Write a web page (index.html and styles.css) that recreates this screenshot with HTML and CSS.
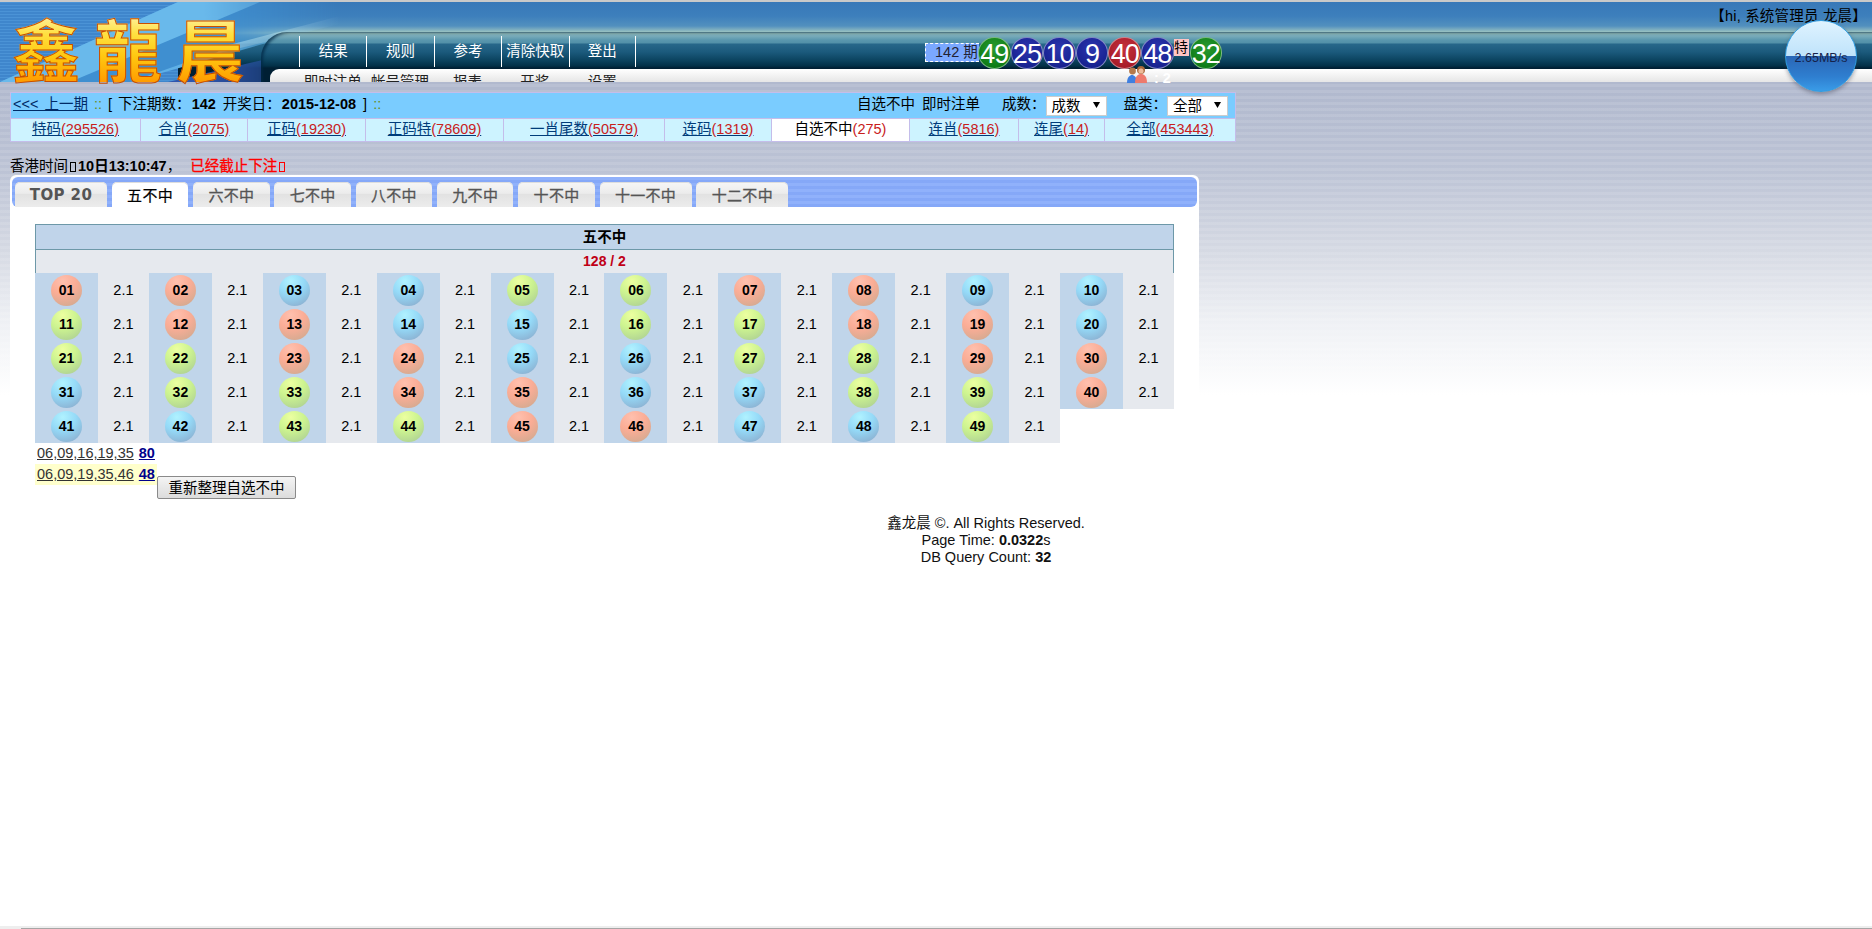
FILE: index.html
```html
<!DOCTYPE html>
<html lang="zh">
<head>
<meta charset="utf-8">
<title>鑫龍晨</title>
<link rel="stylesheet" href="styles.css">
</head>
<body>
<header class="header">
  <svg class="logo-art" width="340" height="80" viewBox="0 0 340 80" aria-hidden="true">
    <defs>
      <linearGradient id="fade" x1="0" x2="1" y1="0" y2="0">
        <stop offset="0.6" stop-color="#fff"/>
        <stop offset="1" stop-color="#000"/>
      </linearGradient>
      <mask id="fadeMask"><rect width="340" height="80" fill="url(#fade)"/></mask>
      <pattern id="lines" width="3" height="3" patternUnits="userSpaceOnUse">
        <rect width="3" height="3" fill="#3f86cc"/>
        <rect width="3" height="1" fill="#4b93d6"/>
      </pattern>
    </defs>
    <rect width="178" height="80" fill="url(#lines)"/>
    <g mask="url(#fadeMask)">
      <polygon points="178,0 340,0 340,20 130,80 0,80" fill="#5fb0e6"/>
      <polygon points="178,0 340,0 340,6 215,24 70,80 0,80" fill="#70c0ee" opacity=".6"/>
      <polygon points="260,0 340,0 340,18 210,52 130,80 70,80" fill="#3f8fd0"/>
      <polygon points="340,14 340,22 215,52 225,44" fill="#8fcaf0"/>
      <polygon points="340,40 340,80 168,80" fill="#2f55ad"/>
    </g>
  </svg>
  <div class="logo">鑫龍晨</div>
  <nav class="nav">
    <ul class="nav-top">
      <li>结果</li><li>规则</li><li>参考</li><li>清除快取</li><li>登出</li>
    </ul>
    <ul class="nav-sub">
      <li>即时注单</li><li>帐号管理</li><li>报表</li><li>开奖</li><li>设置</li>
    </ul>
  </nav>
  <div class="drawn">
    <span class="period">142 期</span>
    <span class="rball g">49</span><span class="rball b">25</span><span class="rball b">10</span><span class="rball b">9</span><span class="rball r">40</span><span class="rball b">48</span>
    <span class="special">特</span>
    <span class="rball g">32</span>
  </div>
  <div class="online">
    <svg width="24" height="18" viewBox="0 0 24 18" aria-hidden="true">
      <path d="M1 18c0-6 3-8 5-8s5 2 5 8z" fill="#3f7fe0"/>
      <circle cx="6.5" cy="6" r="3.4" fill="#b5794a"/>
      <path d="M9 18c0-7 3-9 6-9s6 2 6 9z" fill="#ee7a6c"/>
      <circle cx="15" cy="5" r="4" fill="#a8683a"/>
      <circle cx="15" cy="6" r="2.6" fill="#eebb99"/>
    </svg>
    <b>: 2</b>
  </div>
  <div class="hi">【hi, 系统管理员 龙晨】</div>
  <div class="orb">2.65MB/s</div>
</header>

<main class="main">
  <section class="toolbar">
    <div class="bar-top">
      <div class="bar-left"><a class="prev" href="#">&lt;&lt;&lt; 上一期</a> <i class="dots">::</i> [ 下注期数：<b>142</b> 开奖日：<b>2015-12-08</b> ] <i class="dots">::</i></div>
      <div class="bar-right">
        <span class="bar-title">自选不中 即时注单</span>
        <label class="pick">成数：<select class="sel"><option>成数</option></select></label>
        <label class="pick">盘类：<select class="sel"><option>全部</option></select></label>
      </div>
    </div>
    <div class="bar-links">
      <a href="#">特码<em>(295526)</em></a>
      <a href="#">合肖<em>(2075)</em></a>
      <a href="#">正码<em>(19230)</em></a>
      <a href="#">正码特<em>(78609)</em></a>
      <a href="#">一肖尾数<em>(50579)</em></a>
      <a href="#">连码<em>(1319)</em></a>
      <a href="#" class="on">自选不中<em>(275)</em></a>
      <a href="#">连肖<em>(5816)</em></a>
      <a href="#">连尾<em>(14)</em></a>
      <a href="#">全部<em>(453443)</em></a>
    </div>
  </section>

  <p class="clock">香港时间<span class="tofu"></span><b>10日13:10:47</b>， <strong>已经截止下注</strong><span class="tofu red"></span></p>

  <section class="panel">
    <div class="tabs">
      <a class="tab w92 latin" href="#">TOP 20</a>
      <a class="tab on" href="#">五不中</a>
      <a class="tab" href="#">六不中</a>
      <a class="tab" href="#">七不中</a>
      <a class="tab" href="#">八不中</a>
      <a class="tab" href="#">九不中</a>
      <a class="tab" href="#">十不中</a>
      <a class="tab w92" href="#">十一不中</a>
      <a class="tab w92" href="#">十二不中</a>
    </div>
    <div class="content">
      <div class="t-head">五不中</div>
      <div class="t-sub">128 / 2</div>
      <div class="grid">
        <div class="n"><span class="ball r">01</span></div><div class="o">2.1</div>
        <div class="n"><span class="ball r">02</span></div><div class="o">2.1</div>
        <div class="n"><span class="ball b">03</span></div><div class="o">2.1</div>
        <div class="n"><span class="ball b">04</span></div><div class="o">2.1</div>
        <div class="n"><span class="ball g">05</span></div><div class="o">2.1</div>
        <div class="n"><span class="ball g">06</span></div><div class="o">2.1</div>
        <div class="n"><span class="ball r">07</span></div><div class="o">2.1</div>
        <div class="n"><span class="ball r">08</span></div><div class="o">2.1</div>
        <div class="n"><span class="ball b">09</span></div><div class="o">2.1</div>
        <div class="n"><span class="ball b">10</span></div><div class="o">2.1</div>
        <div class="n"><span class="ball g">11</span></div><div class="o">2.1</div>
        <div class="n"><span class="ball r">12</span></div><div class="o">2.1</div>
        <div class="n"><span class="ball r">13</span></div><div class="o">2.1</div>
        <div class="n"><span class="ball b">14</span></div><div class="o">2.1</div>
        <div class="n"><span class="ball b">15</span></div><div class="o">2.1</div>
        <div class="n"><span class="ball g">16</span></div><div class="o">2.1</div>
        <div class="n"><span class="ball g">17</span></div><div class="o">2.1</div>
        <div class="n"><span class="ball r">18</span></div><div class="o">2.1</div>
        <div class="n"><span class="ball r">19</span></div><div class="o">2.1</div>
        <div class="n"><span class="ball b">20</span></div><div class="o">2.1</div>
        <div class="n"><span class="ball g">21</span></div><div class="o">2.1</div>
        <div class="n"><span class="ball g">22</span></div><div class="o">2.1</div>
        <div class="n"><span class="ball r">23</span></div><div class="o">2.1</div>
        <div class="n"><span class="ball r">24</span></div><div class="o">2.1</div>
        <div class="n"><span class="ball b">25</span></div><div class="o">2.1</div>
        <div class="n"><span class="ball b">26</span></div><div class="o">2.1</div>
        <div class="n"><span class="ball g">27</span></div><div class="o">2.1</div>
        <div class="n"><span class="ball g">28</span></div><div class="o">2.1</div>
        <div class="n"><span class="ball r">29</span></div><div class="o">2.1</div>
        <div class="n"><span class="ball r">30</span></div><div class="o">2.1</div>
        <div class="n"><span class="ball b">31</span></div><div class="o">2.1</div>
        <div class="n"><span class="ball g">32</span></div><div class="o">2.1</div>
        <div class="n"><span class="ball g">33</span></div><div class="o">2.1</div>
        <div class="n"><span class="ball r">34</span></div><div class="o">2.1</div>
        <div class="n"><span class="ball r">35</span></div><div class="o">2.1</div>
        <div class="n"><span class="ball b">36</span></div><div class="o">2.1</div>
        <div class="n"><span class="ball b">37</span></div><div class="o">2.1</div>
        <div class="n"><span class="ball g">38</span></div><div class="o">2.1</div>
        <div class="n"><span class="ball g">39</span></div><div class="o">2.1</div>
        <div class="n"><span class="ball r">40</span></div><div class="o">2.1</div>
        <div class="n"><span class="ball b">41</span></div><div class="o">2.1</div>
        <div class="n"><span class="ball b">42</span></div><div class="o">2.1</div>
        <div class="n"><span class="ball g">43</span></div><div class="o">2.1</div>
        <div class="n"><span class="ball g">44</span></div><div class="o">2.1</div>
        <div class="n"><span class="ball r">45</span></div><div class="o">2.1</div>
        <div class="n"><span class="ball r">46</span></div><div class="o">2.1</div>
        <div class="n"><span class="ball b">47</span></div><div class="o">2.1</div>
        <div class="n"><span class="ball b">48</span></div><div class="o">2.1</div>
        <div class="n"><span class="ball g">49</span></div><div class="o">2.1</div>
      </div>
      <div class="combo"><span class="combo-item"><a class="nums" href="#">06,09,16,19,35</a> <a class="count" href="#">80</a></span></div>
      <div class="combo"><span class="combo-item hl"><a class="nums" href="#">06,09,19,35,46</a> <a class="count" href="#">48</a></span><button class="btn" type="button">重新整理自选不中</button></div>
    </div>
  </section>
</main>

<footer class="footer">
  鑫龙晨 ©. All Rights Reserved.<br>
  Page Time: <b>0.0322</b>s<br>
  DB Query Count: <b>32</b>
</footer>
</body>
</html>
```
FILE: styles.css
```css
* { box-sizing: border-box; }
html, body { margin: 0; padding: 0; }
body {
  min-height: 100vh;
  font: 14.5px/17px "Liberation Sans", "Noto Sans CJK SC", sans-serif;
  color: #000;
  background-color: #fff;
  background-image:
    linear-gradient(#a6a6a6, #a6a6a6),
    linear-gradient(#eee, #eee),
    repeating-linear-gradient(180deg, rgba(255,255,255,.1) 0 3px, rgba(255,255,255,0) 3px 6px),
    linear-gradient(180deg, #b1b9ce 0, #b1b9ce 90px, #bcc3d5 170px, #d5d9e3 250px, #eef0f4 320px, #fff 395px);
  background-repeat: no-repeat;
  background-position: left 21px bottom 0, left bottom, left top, left top;
  background-size: 100% 1px, 100% 3px, 100% 395px, 100% 395px;
}
a { color: inherit; }
ul { list-style: none; margin: 0; padding: 0; }

/* header */
.header {
  position: relative;
  display: flex;
  height: 82px;
  padding-left: 261px;
  border-top: 2px solid #c9c9c9;
  background: linear-gradient(180deg,
    #3878b8 0, #3d7fbc 14px, #5290be 24px, #8db9c0 29px, #a8cdc2 31px, #80b0bc 33px,
    #5a97ae 38px, #5290a8 41px, #27678a 42px, #1b5a7c 50px, #0c4460 58px, #023047 64px, #001f33 66px, #001f33 67px);
}
.logo-art { position: absolute; left: 0; top: 0; }
.logo {
  position: absolute;
  left: 12px;
  top: 12px;
  height: 68px;
  font: 700 68px/68px "Noto Sans CJK TC", sans-serif;
  letter-spacing: 14px;
  white-space: nowrap;
  background: linear-gradient(180deg, #fff2a8 0, #ffe040 20px, #ffc810 42px, #ff9c00 68px);
  -webkit-background-clip: text;
  background-clip: text;
  -webkit-text-fill-color: transparent;
  -webkit-text-stroke: 1px #c84e00;
}
.nav {
  position: relative;
  flex: 1;
  margin-top: 30px;
  border-top-left-radius: 26px;
  background: linear-gradient(180deg,
    #8db9c0 0, #a8cdc2 1px, #80b0bc 3px,
    #5a97ae 8px, #5290a8 11px, #27678a 12px, #1b5a7c 20px, #0c4460 28px, #023047 34px, #001f33 36px, #001f33 37px);
  box-shadow: inset 3px 2px 3px -1px rgba(0,40,70,.75);
}
.nav-top {
  display: flex;
  height: 37px;
  padding: 4px 0 2px 38px;
}
.nav-top li {
  width: 67.4px;
  border-left: 1px solid #fff;
  color: #fff;
  text-align: center;
  line-height: 30px;
  white-space: nowrap;
}
.nav-top li:last-child { border-right: 1px solid #fff; }
.nav-sub {
  display: flex;
  height: 13px;
  margin-left: 9px;
  padding-left: 29px;
  overflow: hidden;
  border-top-left-radius: 9px;
  background: linear-gradient(180deg, #fff, #e6e6e6);
}
.nav-sub li {
  width: 67.4px;
  color: #222;
  text-align: center;
  line-height: 26px;
  white-space: nowrap;
}

.drawn {
  position: absolute;
  left: 925px;
  top: 35px;
  display: flex;
  align-items: flex-start;
}
.period {
  width: 54px;
  height: 19px;
  margin-top: 6px;
  margin-right: -1px;
  padding-left: 9px;
  border: 1px dashed #fff;
  border-right: 0;
  background: #7aa8ff;
  color: #223;
  line-height: 17px;
  white-space: nowrap;
}
.rball {
  width: 32.6px;
  height: 32px;
  border-radius: 50%;
  color: #fff;
  font-size: 27px;
  line-height: 33px;
  letter-spacing: -1px;
  text-align: center;
  border: 1px solid rgba(255,255,255,.45);
}
.rball.g { background: radial-gradient(circle at 50% 35%, #2a9a30, #0b7a14 80%); }
.rball.b { background: radial-gradient(circle at 50% 35%, #2c35ae, #15208e 80%); }
.rball.r { background: radial-gradient(circle at 50% 35%, #c4303c, #a51a28 80%); }
.special {
  width: 15px;
  height: 17px;
  margin-top: 2px;
  margin-right: 1px;
  background: #ffc4c4;
  color: #000;
  font-size: 14px;
  line-height: 17px;
  text-align: center;
}
.online {
  position: absolute;
  left: 1126px;
  top: 63px;
  display: flex;
  gap: 4px;
  color: #fff;
  line-height: 26px;
}
.hi {
  position: absolute;
  right: 5px;
  top: 6px;
  letter-spacing: .2px;
  white-space: nowrap;
}
.orb {
  position: absolute;
  left: 1785px;
  top: 18px;
  width: 72px;
  height: 72px;
  border-radius: 50%;
  border: 1px solid #2f9be0;
  background: linear-gradient(180deg, #dff3ff 0, #bfe3fb 50%, #2a66b6 50%, #2f7fd0 80%, #3a9ce8 100%);
  box-shadow: 0 2px 4px rgba(60,60,80,.45);
  color: #15224a;
  font-size: 12.5px;
  text-align: center;
  line-height: 74px;
  white-space: nowrap;
}

/* toolbar */
.main { padding: 10px 0 0 10px; }
.toolbar {
  width: 1226px;
  border: 1px solid #c4bdea;
}
.bar-top {
  display: flex;
  justify-content: space-between;
  height: 25px;
  padding: 3px 7px 0 2px;
  background: #7accff;
}
.bar-left { word-spacing: 2px; }
.bar-top b { margin: 0 1px; }
.prev { color: #002a66; }
.dots { font-style: normal; color: #6a8a1a; }
.bar-right { display: flex; align-items: flex-start; }
.bar-title { margin-right: 22px; word-spacing: 3px; }
.pick { display: flex; align-items: flex-start; margin-right: 17px; }
.pick:last-child { margin-right: 0; }
.sel {
  appearance: none;
  -webkit-appearance: none;
  width: 61px;
  height: 20px;
  padding: 0 0 0 5px;
  border: 1px solid #ccc;
  border-radius: 0;
  background: #fff url("data:image/svg+xml,%3Csvg xmlns='http://www.w3.org/2000/svg' width='7' height='6'%3E%3Cpath d='M0 0h7L3.5 6z'/%3E%3C/svg%3E") no-repeat right 6px top 5px;
  color: #000;
  font: 14.5px "Liberation Sans", "Noto Sans CJK SC", sans-serif;
}
.bar-links {
  display: grid;
  grid-template-columns: 129px 107px 118px 138px 161px 107px 138px 109px 86px 1fr;
  height: 23px;
  background: #cdf3ff;
  border-top: 1px solid #c4bdea;
}
.bar-links a {
  color: #003c7a;
  text-align: center;
  line-height: 21px;
  border-left: 1px solid #c4bdea;
}
.bar-links a:first-child { border-left: 0; }
.bar-links a.on { background: #fff; color: #000; text-decoration: none; }
.bar-links em { font-style: normal; color: #c8201c; }

.clock {
  margin: 15px 0 0;
  height: 18px;
  line-height: 18px;
  white-space: nowrap;
}
.clock strong { color: #f00; font-weight: 400; -webkit-text-stroke: .3px #f00; margin-left: 5px; }
.tofu {
  display: inline-block;
  width: 6px;
  height: 10px;
  margin: 0 2px;
  border: 1px solid #000;
  vertical-align: -1px;
}
.tofu.red { border-color: #f00; }

/* panel */
.panel {
  width: 1189px;
  border-radius: 6px 6px 0 0;
  background: #fff;
  padding: 2px 2px 0;
}
.tabs {
  display: flex;
  gap: 4.8px;
  height: 30px;
  padding: 5px 0 0 3px;
  border-radius: 6px;
  background:
    repeating-linear-gradient(180deg, rgba(255,255,255,.07) 0 3px, rgba(0,0,80,.02) 3px 6px),
    #88abfb;
}
.tab {
  flex: none;
  width: 76.5px;
  height: 25px;
  border-radius: 5px 5px 0 0;
  background: linear-gradient(180deg, #f6f6f6, #ececec 45%, #e2e2e2 50%, #ececec);
  color: #555;
  -webkit-text-stroke: .3px #555;
  font-size: 15px;
  line-height: 27px;
  letter-spacing: .3px;
  text-align: center;
  text-decoration: none;
  box-shadow: inset 0 1px 0 #ddd;
}
.tab.w92 { width: 92px; }
.tab.latin { font: 700 15px/27px "DejaVu Sans", sans-serif; letter-spacing: .4px; -webkit-text-stroke: 0; }
.tab.on {
  height: 26px;
  background: #fff;
  color: #000;
  -webkit-text-stroke: .2px #000;
}
.content { padding: 17px 0 0 23px; }
.t-head, .t-sub {
  width: 1139px;
  text-align: center;
  border: 1px solid #6d98a8;
  border-bottom: 0;
}
.t-head {
  height: 25px;
  background: #c0d4ea;
  line-height: 24px;
  font-weight: 700;
}
.t-sub {
  height: 24px;
  background: #e6e9ee;
  color: #c00016;
  font-size: 14px;
  font-weight: 700;
  line-height: 22px;
}
.grid {
  display: grid;
  grid-template-columns: repeat(10, 63px 50.9px);
  grid-auto-rows: 34px;
  width: 1139px;
}
.n {
  display: flex;
  align-items: center;
  justify-content: center;
  background: #c0d5ea;
}
.o {
  background: #e6e9ee;
  text-align: center;
  line-height: 34px;
}
.ball {
  width: 31px;
  height: 31px;
  border-radius: 50%;
  font-size: 14px;
  font-weight: 700;
  text-align: center;
  line-height: 31px;
}
.ball.r { background: radial-gradient(circle at 38% 20%, #ffc0ae 0, #fbad96 42%, #cba98f 95%); }
.ball.b { background: radial-gradient(circle at 38% 20%, #b0f2ff 0, #95daf8 42%, #89a8c9 95%); }
.ball.g { background: radial-gradient(circle at 38% 20%, #ecffa0 0, #cdf490 42%, #a9cb94 95%); }

.combo {
  display: flex;
  align-items: flex-start;
  height: 21px;
  width: 400px;
}
.combo-item {
  width: 122px;
  height: 21px;
  padding-left: 2px;
  line-height: 20px;
  white-space: nowrap;
}
.combo-item.hl { background: #ffffcc; }
.nums { color: #333; margin-right: 1px; }
.count { color: #00008b; font-weight: 700; }
.btn {
  flex: none;
  width: 139px;
  height: 23px;
  margin-top: 12px;
  padding: 0;
  border: 1px solid #8a8a8a;
  border-radius: 2px;
  background: linear-gradient(180deg, #f4f4f4, #dcdcdc);
  color: #000;
  font: 14.5px/20px "Liberation Sans", "Noto Sans CJK SC", sans-serif;
}

/* footer */
.footer {
  margin-top: 30px;
  padding-left: 100px;
  text-align: center;
  color: #111;
}
```
